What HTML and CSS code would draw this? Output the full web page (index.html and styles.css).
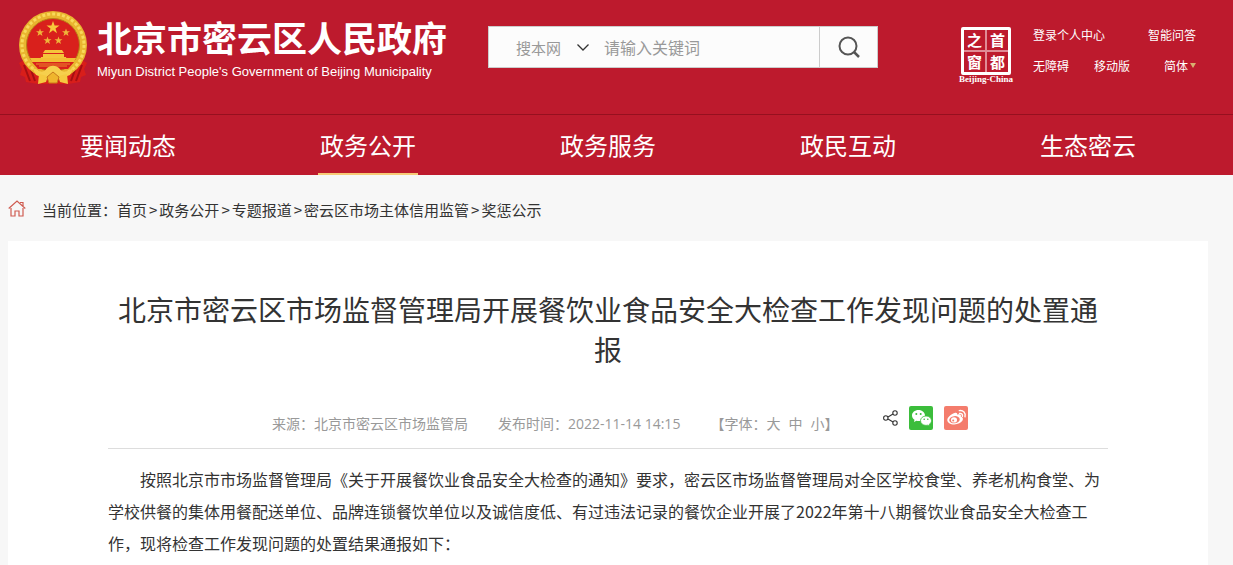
FILE: index.html
```html
<!DOCTYPE html>
<html lang="zh-CN">
<head>
    <meta charset="UTF-8">
    <meta name="viewport" content="width=device-width, initial-scale=1.0">
    <title>北京市密云区人民政府</title>
    <link rel="stylesheet" href="styles.css">
</head>
<body>

    <header class="header">
        <div class="wrap header-top">
            <a class="logo" href="#">
                <svg class="emblem" viewBox="0 0 70 74" aria-hidden="true">
                    <path d="M9 47 L1 52 L4 58 L2 64 L7 66 L8 71 L20 73 L50 73 L62 71 L63 66 L68 64 L66 58 L69 52 L61 47z" fill="#d81e1a"/>
                    <path d="M6 54l6 16M12 56l5 14M64 54l-6 16M58 56l-5 14" stroke="#a50f12" stroke-width="2"/>
                    <circle cx="35" cy="34" r="34" fill="#e9b52f"/>
                    <circle cx="35" cy="34" r="31" fill="none" stroke="#f8d95b" stroke-width="3" stroke-dasharray="3 2"/>
                    <circle cx="35" cy="34" r="26.500" fill="#d9201c" stroke="#b98218" stroke-width="1"/>
                    <path d="M35 10l1.600 4.600h4.900l-4 2.900 1.500 4.700-4-2.900-4 2.900 1.500-4.700-4-2.900h4.900z" fill="#f8c93b"/>
                    <g fill="#efb53a">
                        <path id="star" d="M22 17.500l1 2.800h3l-2.400 1.800.9 2.900-2.500-1.800-2.500 1.800.9-2.900-2.400-1.800h3z"/>
                        <use href="#star" x="26"/>
                        <use href="#star" x="7.500" y="8"/>
                        <use href="#star" x="18.500" y="8"/>
                    </g>
                    <path d="M27 39h17l2 3h-21zM25 43h21v3h-21zM23 46h25l1 4h-27z" fill="#f5c43b"/>
                    <path d="M12 47h46l-2 4h-42z" fill="#f3bd35"/>
                    <path d="M14 51h42l-6 7h-30z" fill="#d9201c"/>
                    <path d="M18 53h34M21 55h28" stroke="#eb8a2b"/>
                    <path d="M14 56c7 6 12 6 15 1 4-3 8-3 12 0 3 5 8 5 15-1l-4 8c-8 3-12 2-17-2-5 4-9 5-17 2z" fill="#f6cf4d"/>
                    <path d="M21 63l9 2-2 6-8 2zM49 63l-9 2 2 6 8 2z" fill="#f5c940"/>
                    <path d="M29 66l6-5 6 5-2 6h-8z" fill="#efb52d" stroke="#c8791b"/>
                </svg>
                <span class="logo-text">
                    <strong>北京市密云区人民政府</strong>
                    <span>Miyun District People's Government of Beijing Municipality</span>
                </span>
            </a>

            <form class="search">
                <select class="search-scope" aria-label="搜索范围">
                    <option>搜本网</option>
                </select>
                <svg class="chevron" viewBox="0 0 12 7" aria-hidden="true"><path d="M.5.5l5.500 5.500 5.500-5.500" fill="none" stroke="#333" stroke-width="1.300"/></svg>
                <input type="text" class="search-input" aria-label="关键词" placeholder="请输入关键词">
                <button type="button" class="search-button" aria-label="搜索">
                    <svg viewBox="0 0 22 22" aria-hidden="true"><circle cx="10" cy="10" r="8.500" fill="none" stroke="#555" stroke-width="2"/><path d="M16 16l5 5" stroke="#555" stroke-width="2.500"/></svg>
                </button>
            </form>

            <a class="capital" href="#">
                <span class="stamp"><i>之</i><i>首</i><i>窗</i><i>都</i></span>
                <span class="stamp-name">Beijing-China</span>
            </a>

            <div class="tools">
                <div class="tools-row">
                    <a href="#">登录个人中心</a>
                    <a href="#">智能问答</a>
                </div>
                <div class="tools-row">
                    <a href="#">无障碍</a>
                    <a href="#">移动版</a>
                    <a href="#" class="lang">简体</a>
                </div>
            </div>
        </div>

        <nav class="nav">
            <div class="wrap nav-list">
                <a href="#"><span>要闻动态</span></a>
                <a href="#" class="active"><span>政务公开</span></a>
                <a href="#"><span>政务服务</span></a>
                <a href="#"><span>政民互动</span></a>
                <a href="#"><span>生态密云</span></a>
            </div>
        </nav>
    </header>

    <div class="wrap crumbs">
        <svg class="home" viewBox="0 0 18 17" aria-hidden="true"><path d="M.7 8.500L9 1l8.300 7.500M3 8v8h4v-5h4v5h4V8M12 2.500h3v4" fill="none" stroke="#cf5b50" stroke-width="1.200"/></svg>
        <div>当前位置：<a href="#">首页</a><b>&gt;</b><a href="#">政务公开</a><b>&gt;</b><a href="#">专题报道</a><b>&gt;</b><a href="#">密云区市场主体信用监管</a><b>&gt;</b><a href="#">奖惩公示</a></div>
    </div>

    <main class="wrap article">
        <h1>北京市密云区市场监督管理局开展餐饮业食品安全大检查工作发现问题的处置通报</h1>
        <div class="meta">
            <span>来源：北京市密云区市场监管局</span>
            <span>发布时间：<time>2022-11-14 14:15</time></span>
            <span class="sizes">【字体：<a href="#">大</a><a href="#">中</a><a href="#">小</a>】</span>
            <div class="share">
                <a href="#" class="share-more" aria-label="分享"><svg viewBox="0 0 15 16" aria-hidden="true"><g fill="none" stroke="#333" stroke-width="1.100"><circle cx="2.800" cy="8" r="2.200"/><circle cx="12" cy="3" r="2.200"/><circle cx="12" cy="13" r="2.200"/><path d="M5 7l5-3M5 9l5 3"/></g></svg></a>
                <a href="#" aria-label="微信"><svg viewBox="0 0 24 24" aria-hidden="true">
                    <rect width="24" height="24" rx="2" fill="#3bbd3b"/>
                    <path d="M9.500 4C5.800 4 3 6.400 3 9.500c0 1.800 1 3.300 2.500 4.300L5 16l2.400-1.200c.7.200 1.400.2 2.100.2C13.200 15 16 12.500 16 9.500S13.200 4 9.500 4z" fill="#fff"/>
                    <path d="M17 10c-3.100 0-5.500 2.100-5.500 4.700s2.400 4.700 5.500 4.700c.6 0 1.200-.1 1.700-.2l2 1-.5-1.800c1.400-.9 2.300-2.200 2.300-3.700 0-2.600-2.400-4.700-5.500-4.700z" fill="#fff" stroke="#3bbd3b" stroke-width=".8"/>
                    <g fill="#3bbd3b"><circle cx="7.300" cy="8" r="1"/><circle cx="11.700" cy="8" r="1"/><circle cx="15.200" cy="13.200" r=".8"/><circle cx="18.800" cy="13.200" r=".8"/></g>
                </svg></a>
                <a href="#" aria-label="微博"><svg viewBox="0 0 24 24" aria-hidden="true">
                    <rect width="24" height="24" rx="2" fill="#f47c6c"/>
                    <path d="M10.500 7c1.700-.8 3.100-.3 2.800 1.800 2.300-.9 4.200-.4 3.500 1.700 2 .7 2.700 2.200 1.700 4.100-1.300 2.300-4.500 3.900-8.200 3.900-4.100 0-7-1.800-7-4.500 0-2.400 3.700-5.800 7.200-7z" fill="#fff"/>
                    <ellipse cx="10.500" cy="13.700" rx="5.300" ry="3.600" transform="rotate(-8 10.500 13.700)" fill="#f47c6c"/>
                    <ellipse cx="10" cy="13.900" rx="3" ry="2.600" fill="#fff"/>
                    <circle cx="9.200" cy="14.500" r="1" fill="#f47c6c"/>
                    <path d="M15.500 7.400c2-.4 3.400 1.100 2.900 2.900M15.300 4.600c4-.6 6.700 2.400 5.700 6.200" fill="none" stroke="#fff" stroke-width="1.400" stroke-linecap="round"/>
                </svg></a>
            </div>
        </div>
        <div class="content">
            <p>按照北京市市场监督管理局《关于开展餐饮业食品安全大检查的通知》要求，密云区市场监督管理局对全区学校食堂、养老机构食堂、为学校供餐的集体用餐配送单位、品牌连锁餐饮单位以及诚信度低、有过违法记录的餐饮企业开展了2022年第十八期餐饮业食品安全大检查工作，现将检查工作发现问题的处置结果通报如下：</p>
        </div>
    </main>

</body>
</html>
```

FILE: styles.css
```css
* {
    box-sizing: border-box;
}
body {
    margin: 0;
    min-height: 100vh;
    display: flex;
    flex-direction: column;
    background: #f7f7f7;
    color: #333;
    font-family: "Noto Sans CJK SC", sans-serif;
    font-size: 16px;
    text-spacing-trim: space-all;
}
a {
    color: inherit;
    text-decoration: none;
}
svg {
    display: block;
}
.wrap {
    max-width: 1200px;
    margin: 0 25px 0 8px;
}
.header {
    background: #bd1a2d;
    color: #fff;
}
.header-top {
    height: 114px;
    display: flex;
    align-items: flex-start;
    padding-left: 10px;
}
.logo {
    display: flex;
    gap: 9px;
    padding-top: 11px;
    width: 470px;
}
.emblem {
    width: 70px;
    height: 74px;
}
.logo-text {
    display: flex;
    flex-direction: column;
    white-space: nowrap;
}
.logo-text strong {
    font-size: 35px;
    line-height: 52px;
}
.logo-text span {
    font-family: "Liberation Sans", Arial, sans-serif;
    font-size: 13px;
    line-height: 18px;
}

/* search */
.search {
    display: flex;
    align-items: center;
    width: 390px;
    height: 42px;
    margin-top: 26px;
    padding-left: 27px;
    background: #fcfcfc;
    border: 1px solid #ccc;
}
.search-scope {
    appearance: none;
    width: 61px;
    padding: 0;
    border: 0;
    background: none;
    color: #999;
    font: 15px "Noto Sans CJK SC", sans-serif;
}
.chevron {
    width: 12px;
    height: 7px;
}
.search-input {
    flex: 1;
    min-width: 0;
    height: 40px;
    padding: 0 0 0 15px;
    border: 0;
    background: none;
    font: 16px "Noto Sans CJK SC", sans-serif;
}
.search-input::placeholder {
    color: #999;
}
.search-button {
    width: 58px;
    height: 40px;
    padding: 0 18px;
    border: 0;
    border-left: 1px solid #ccc;
    background: none;
}
.search-button svg {
    width: 22px;
    height: 22px;
}

/* right side */
.capital {
    margin: 27px 20px 0 auto;
    display: flex;
    flex-direction: column;
    align-items: center;
}
.stamp {
    display: grid;
    grid-template-columns: 1fr 1fr;
    gap: 2px;
    width: 50px;
    height: 48px;
    border: 3px solid #fff;
    border-radius: 2px;
    background: linear-gradient(#e08b95, #e08b95) center / 2px 100% no-repeat, linear-gradient(#e08b95, #e08b95) center / 100% 2px no-repeat;
}
.stamp i {
    font: normal bold 15px/20px "Noto Sans CJK SC", sans-serif;
    height: 20px;
    text-align: center;
}
.stamp-name {
    font: bold 9px/9px "Liberation Serif", serif;
}
.tools {
    width: 175px;
    padding-top: 19px;
    font-size: 12px;
    line-height: 31px;
}
.tools-row {
    display: flex;
    gap: 25px;
    padding-right: 12px;
}
.tools-row a:last-child {
    margin-left: auto;
}
.lang::after {
    content: "";
    display: inline-block;
    margin: 0 0 3px 2px;
    border: 3px solid transparent;
    border-top: 5px solid #d8b070;
    border-bottom: 0;
}

.nav {
    border-top: 1px solid #96101f;
}
.nav-list {
    display: grid;
    grid-template-columns: repeat(5, 1fr);
    text-align: center;
    font-size: 24px;
}
.nav-list span {
    display: inline-block;
    height: 60px;
    padding: 0 2px;
    line-height: 60px;
    vertical-align: top;
}
.nav-list .active span {
    border-bottom: 2px solid #f7cb77;
}

.crumbs {
    display: flex;
    gap: 16px;
    height: 66px;
    padding-top: 25px;
    font-size: 15px;
    line-height: 20px;
}
.crumbs b {
    padding: 0 2px;
    font-weight: normal;
}
.home {
    width: 18px;
    height: 17px;
}

.article {
    flex: 1;
    padding: 48px 100px 0;
    background: #fff;
}
h1 {
    margin: 0;
    font-size: 28px;
    font-weight: normal;
    line-height: 40px;
    text-align: center;
}
.meta {
    display: flex;
    gap: 30px;
    margin-top: 30px;
    padding-left: 164px;
    border-bottom: 1px solid #ddd;
    color: #999;
    font-size: 14px;
    line-height: 48px;
}
.meta time {
    font-family: "Open Sans", sans-serif;
}
.sizes a + a {
    margin-left: 8px;
}
.share {
    display: flex;
    align-items: center;
    gap: 11px;
    height: 24px;
    margin: 7px 0 0 15px;
}
.share svg {
    width: 24px;
    height: 24px;
}
.share .share-more svg {
    width: 15px;
    height: 16px;
}
.content {
    padding-top: 14px;
    line-height: 32px;
}
.content p {
    margin: 0;
    text-indent: 2em;
}
```
